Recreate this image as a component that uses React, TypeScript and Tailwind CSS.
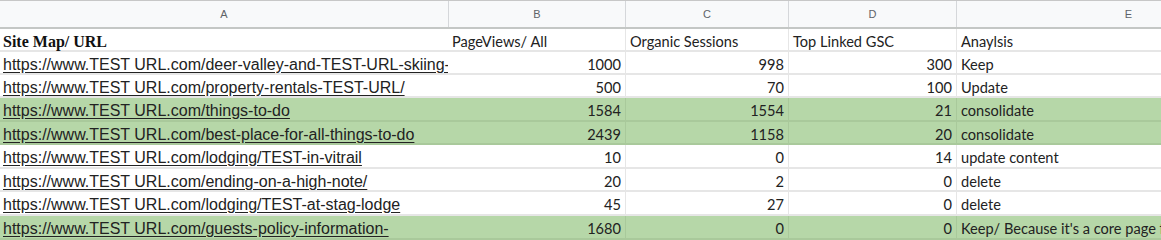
import React from "react";

type Row = {
  url: string;
  b: string;
  c: string;
  d: string;
  e: string;
  green?: boolean;
  h: string;
};

const rows: Row[] = [
  { url: "https://www.TEST URL.com/deer-valley-and-TEST-URL-skiing-in-park-city", b: "1000", c: "998", d: "300", e: "Keep", h: "h-[23px]" },
  { url: "https://www.TEST URL.com/property-rentals-TEST-URL/", b: "500", c: "70", d: "100", e: "Update", h: "h-[23px]" },
  { url: "https://www.TEST URL.com/things-to-do", b: "1584", c: "1554", d: "21", e: "consolidate", green: true, h: "h-[24px]" },
  { url: "https://www.TEST URL.com/best-place-for-all-things-to-do", b: "2439", c: "1158", d: "20", e: "consolidate", green: true, h: "h-[23px]" },
  { url: "https://www.TEST URL.com/lodging/TEST-in-vitrail", b: "10", c: "0", d: "14", e: "update content", h: "h-[24px]" },
  { url: "https://www.TEST URL.com/ending-on-a-high-note/", b: "20", c: "2", d: "0", e: "delete", h: "h-[23px]" },
  { url: "https://www.TEST URL.com/lodging/TEST-at-stag-lodge", b: "45", c: "27", d: "0", e: "delete", h: "h-[24px]" },
  { url: "https://www.TEST URL.com/guests-policy-information-", b: "1680", c: "0", d: "0", e: "Keep/ Because it's a core page for the site", green: true, h: "h-[24px]" },
];

const grid = "grid grid-cols-[448px_177px_163px_168px_344px]";
const cal = "font-['Lato','Open_Sans',sans-serif] text-[14.6px] text-[#222222]";

export default function App() {
  return (
    <div className="w-[1161px] h-[240px] overflow-hidden bg-white">
      <div className="w-[1300px]">
        {/* column letters */}
        <div className={`${grid} h-[29px] bg-[#f8f9fa] border-t border-t-[#c7c7c7] border-b-2 border-b-[#c4c7c5] font-['Liberation_Sans',Arial,sans-serif] text-[11px] text-[#5f6368]`}>
          {["A", "B", "C", "D", "E"].map((l, i) => (
            <div key={l} className={`flex items-center justify-center ${i > 0 ? "border-l border-l-[#d5d7da]" : ""}`}>
              {l}
            </div>
          ))}
        </div>
        {/* header row */}
        <div className={`${grid} h-[23px] border-b-2 border-b-[#e6e6e6]`}>
          <div className="flex items-end pl-[3px] pb-[1px] font-['Liberation_Serif','Times_New_Roman',serif] font-bold text-[16px] text-[#111111] leading-none">
            <span className="pb-[2px]">Site Map/ URL</span>
          </div>
          <div className={`flex items-center pt-[2px] pl-[4px] ${cal}`}>PageViews/ All</div>
          <div className={`flex items-center pt-[2px] pl-[4px] border-l border-l-[#e6e6e6] ${cal}`}>Organic Sessions</div>
          <div className={`flex items-center pt-[2px] pl-[4px] border-l border-l-[#e6e6e6] ${cal}`}>Top Linked GSC</div>
          <div className={`flex items-center pt-[2px] pl-[4px] border-l border-l-[#e6e6e6] ${cal}`}>Anaylsis</div>
        </div>
        {rows.map((r, i) => {
          const bg = r.green ? "bg-[#b6d7a8]" : "bg-white";
          const line = r.green ? "border-l-[#a9c99b]" : "border-l-[#e6e6e6]";
          const bottom = r.green ? "border-b-[#a9c99b]" : "border-b-[#e6e6e6]";
          return (
            <div key={i} className={`${grid} ${r.h} ${bg} border-b-2 ${bottom}`}>
              <div className="flex items-center pt-[2px] pl-[3px] overflow-hidden whitespace-nowrap font-['Liberation_Sans',Arial,sans-serif] text-[16px] text-[#222222] underline underline-offset-[2px]">
                {r.url}
              </div>
              <div className={`flex items-center justify-end pt-[2px] pr-[4px] ${cal}`}>{r.b}</div>
              <div className={`flex items-center justify-end pt-[2px] pr-[4px] border-l ${line} ${cal}`}>{r.c}</div>
              <div className={`flex items-center justify-end pt-[2px] pr-[4px] border-l ${line} ${cal}`}>{r.d}</div>
              <div className={`flex items-center pt-[2px] pl-[4px] border-l ${line} whitespace-nowrap ${cal}`}>{r.e}</div>
            </div>
          );
        })}
      </div>
    </div>
  );
}
